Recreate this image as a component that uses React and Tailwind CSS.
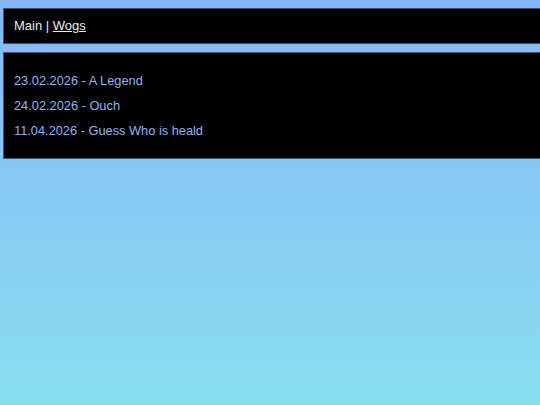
export default function App() {
  const posts = [
    "23.02.2026 - A Legend",
    "24.02.2026 - Ouch",
    "11.04.2026 - Guess Who is heald",
  ]

  return (
    <div className="min-h-screen w-full overflow-hidden bg-gradient-to-b from-[#86b6f8] to-[#89dfee] pt-[8px] pl-[3px] font-['Liberation_Sans',Arial,sans-serif]">
      <div className="mr-[-12px] bg-black border border-[#3d5272] pl-[10px] pt-[9px] pb-[10px] text-[13px] leading-[15px] text-[#ececec]">
        Main | <a href="#" className="underline">Wogs</a>
      </div>
      <div className="mr-[-12px] mt-[8px] bg-black border border-[#3d5272] pl-[10px] pt-[15px] pb-[15px]">
        {posts.map((item, index) => (
          <div key={index} className="text-[12.8px] leading-[25px] text-[#8ab4f8]">{item}</div>
        ))}
      </div>
    </div>
  )
}
